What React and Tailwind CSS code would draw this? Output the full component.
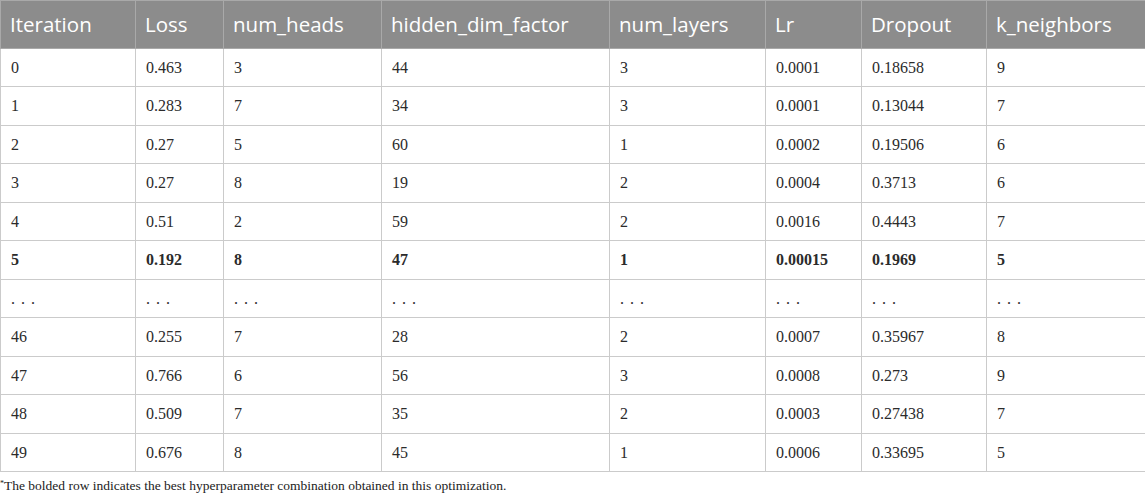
import React from 'react';

const columns = [
    { key: 'iteration', label: 'Iteration', width: 135 },
    { key: 'loss', label: 'Loss', width: 88 },
    { key: 'heads', label: 'num_heads', width: 158 },
    { key: 'hidden', label: 'hidden_dim_factor', width: 228 },
    { key: 'layers', label: 'num_layers', width: 156 },
    { key: 'lr', label: 'Lr', width: 96 },
    { key: 'dropout', label: 'Dropout', width: 125 },
    { key: 'k', label: 'k_neighbors', width: 159 },
];

const ELL = '. . .';

const rows = [
    ['0', '0.463', '3', '44', '3', '0.0001', '0.18658', '9'],
    ['1', '0.283', '7', '34', '3', '0.0001', '0.13044', '7'],
    ['2', '0.27', '5', '60', '1', '0.0002', '0.19506', '6'],
    ['3', '0.27', '8', '19', '2', '0.0004', '0.3713', '6'],
    ['4', '0.51', '2', '59', '2', '0.0016', '0.4443', '7'],
    ['5', '0.192', '8', '47', '1', '0.00015', '0.1969', '5'],
    [ELL, ELL, ELL, ELL, ELL, ELL, ELL, ELL],
    ['46', '0.255', '7', '28', '2', '0.0007', '0.35967', '8'],
    ['47', '0.766', '6', '56', '3', '0.0008', '0.273', '9'],
    ['48', '0.509', '7', '35', '2', '0.0003', '0.27438', '7'],
    ['49', '0.676', '8', '45', '1', '0.0006', '0.33695', '5'],
];

const BEST_ROW = 5;

export default function App() {
    return (
        <div className="w-[1145px] h-[496px] bg-white overflow-hidden">
            <table className="table-fixed border-collapse w-[1145px]">
                <colgroup>
                    {columns.map(col => (
                        <col key={col.key} style={{ width: col.width }} />
                    ))}
                </colgroup>
                <thead>
                    <tr className="h-[48px] bg-[#8c8c8c]">
                        {columns.map(col => (
                            <th
                                key={col.key}
                                className="border border-[#a9a9a9] px-[9px] text-left align-middle font-normal text-white text-[20.5px] font-['Open_Sans',sans-serif]"
                            >
                                {col.label}
                            </th>
                        ))}
                    </tr>
                </thead>
                <tbody>
                    {rows.map((row, i) => (
                        <tr
                            key={i}
                            className={i % 2 === 0 ? 'h-[38px]' : 'h-[39px]'}
                        >
                            {row.map((cell, j) => (
                                <td
                                    key={j}
                                    className={`border border-[#cbcbcb] px-[10px] align-middle text-[16px] text-[#2b2b2b] font-['Liberation_Serif',serif] ${i === BEST_ROW ? 'font-bold' : ''} ${cell === ELL ? 'tracking-[1px]' : ''}`}
                                >
                                    {cell}
                                </td>
                            ))}
                        </tr>
                    ))}
                </tbody>
            </table>
            <p className="mt-[6px] text-[13.5px] leading-[16px] text-[#222] font-['Liberation_Serif',serif]">
                <sup className="text-[8px]">*</sup>The bolded row indicates the best hyperparameter combination obtained in this optimization.
            </p>
        </div>
    );
}
